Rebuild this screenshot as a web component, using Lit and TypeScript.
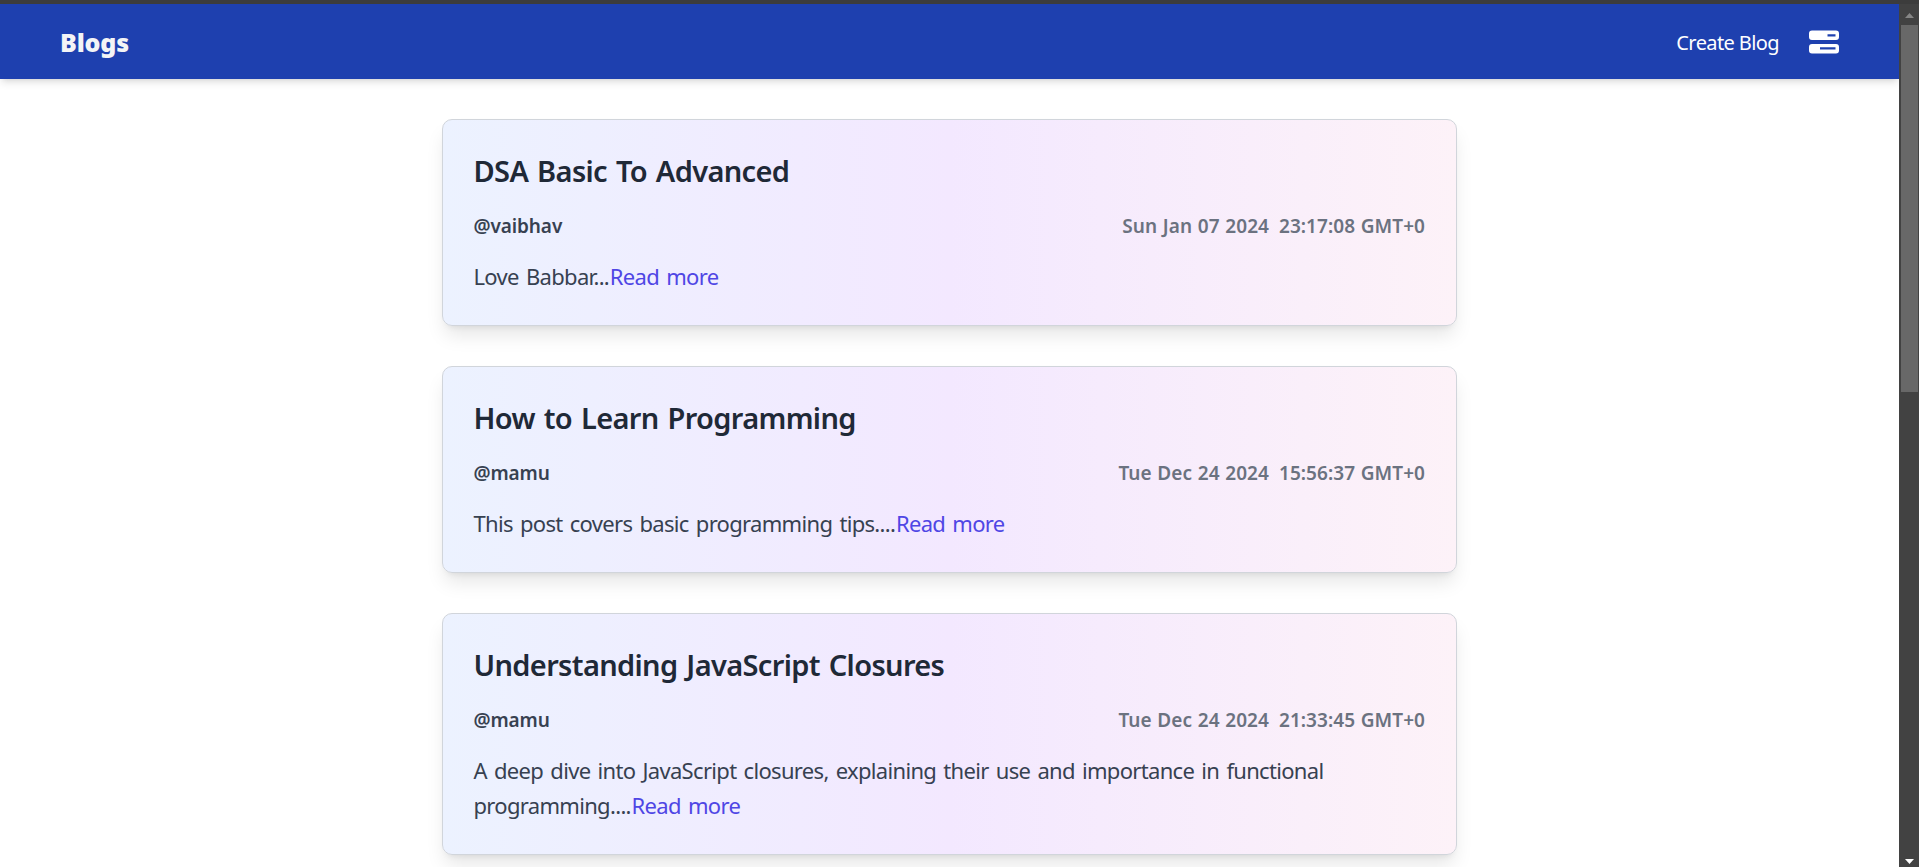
import { LitElement, html, css } from "lit";
import { customElement, property } from "lit/decorators.js";

interface Post {
  title: string;
  author: string;
  day: string;
  time: string;
  text: string;
}

const POSTS: Post[] = [
  { title: "DSA Basic To Advanced", author: "vaibhav", day: "Sun Jan 07 2024", time: "23:17:08 GMT+0", text: "Love Babbar..." },
  { title: "How to Learn Programming", author: "mamu", day: "Tue Dec 24 2024", time: "15:56:37 GMT+0", text: "This post covers basic programming tips...." },
  { title: "Understanding JavaScript Closures", author: "mamu", day: "Tue Dec 24 2024", time: "21:33:45 GMT+0", text: "A deep dive into JavaScript closures, explaining their use and importance in functional programming...." },
];

@customElement("blog-card")
class BlogCard extends LitElement {
  @property({ attribute: false }) post!: Post;

  static styles = css`
    :host {
      display: block;
      box-sizing: border-box;
      padding: 30px 31px 31px 30.5px;
      border: 1px solid #d1d5db;
      border-radius: 10px;
      background: linear-gradient(to right, #ecf2ff, #f3e8ff 50%, #fdf2f8);
      box-shadow: 0 12.5px 18.75px -3.75px rgb(0 0 0 / 0.1), 0 5px 7.5px -5px rgb(0 0 0 / 0.1);
    }
    .title { margin: 0 0 20px; padding-top: 1px; font-size: 29px; line-height: 40px; font-weight: 560; letter-spacing: -0.65px; word-spacing: 2px; color: #1f2937; }
    .meta { display: flex; justify-content: space-between; margin-bottom: 18px; font-size: 19px; line-height: 30px; font-weight: 560; }
    .author { color: #374151; letter-spacing: -0.1px; }
    .date { display: flex; gap: 10px; color: #6b7280; letter-spacing: 0.05px; word-spacing: 0.7px; }
    .text { margin: 0; font-size: 22px; line-height: 35px; letter-spacing: -0.68px; word-spacing: 2.1px; color: #374151; }
    .more { padding-left: 0.7px; color: #4f46e5; text-decoration: none; }
  `;

  render() {
    const p = this.post;
    return html`
      <h2 class="title">${p.title}</h2>
      <div class="meta">
        <span class="author">@${p.author}</span>
        <span class="date"><span>${p.day}</span><span>${p.time}</span></span>
      </div>
      <p class="text">${p.text}<a class="more">Read more</a></p>
    `;
  }
}

@customElement("app-root")
class AppRoot extends LitElement {
  static styles = css`
    :host { display: flex; flex-direction: column; height: 100vh; overflow: hidden; background: #fff; font-family: "Noto Sans", "Open Sans", sans-serif; }
    .edge { flex: none; height: 4px; background: #3c3c3c; }
    .frame { flex: 1; min-height: 0; display: flex; }
    .page { flex: 1; min-width: 0; overflow: hidden; }
    .nav { box-sizing: border-box; height: 75px; padding: 0 60px; display: flex; align-items: center; justify-content: space-between; background: #1e40af; box-shadow: 0 5px 7.5px -1.25px rgb(0 0 0 / 0.1), 0 2.5px 5px -2.5px rgb(0 0 0 / 0.1); }
    .logo { color: #f3f4f6; font-size: 25px; line-height: 35px; font-weight: 900; letter-spacing: -0.2px; padding-top: 2px; }
    .links { display: flex; align-items: center; gap: 30px; color: #fff; font-size: 20px; line-height: 30px; letter-spacing: -0.6px; }
    .label { padding-top: 2px; }
    .icon { display: block; width: 30px; height: 24px; }
    .list { width: 1015px; margin: 40px auto 0; display: flex; flex-direction: column; gap: 40px; }
    .bar { flex: none; box-sizing: border-box; width: 20px; padding: 9px 1px 3px 2px; display: flex; flex-direction: column; align-items: center; background: #424242; }
    .arrow { width: 9px; height: 5px; display: block; }
    .thumb { width: 17px; height: 367px; margin: 7px 0 auto; background: #686868; }
  `;

  render() {
    return html`
      <div class="edge"></div>
      <div class="frame">
        <div class="page">
          <nav class="nav">
            <span class="logo">Blogs</span>
            <div class="links">
              <span class="label">Create Blog</span>
              <svg class="icon" viewBox="0 0 30 24" fill="#fff" fill-rule="evenodd">
                <path d="M3 .5H27Q30 .5 30 3.500V7Q30 10 27 10H3Q0 10 0 7V3.500Q0 .5 3 .5ZM18.500 4.300V6.500H26.500V4.300Z" />
                <path d="M3 14H27Q30 14 30 17V20.500Q30 23.500 27 23.500H3Q0 23.500 0 20.500V17Q0 14 3 14ZM11 17.300V19.500H26.500V17.300Z" />
              </svg>
            </div>
          </nav>
          <main class="list">${POSTS.map((p) => html`<blog-card .post=${p}></blog-card>`)}</main>
        </div>
        <div class="bar">
          <svg class="arrow" viewBox="0 0 9 5"><path d="M0 5L4.500 0L9 5Z" fill="#868686" /></svg>
          <div class="thumb"></div>
          <svg class="arrow" viewBox="0 0 9 5"><path d="M0 0L4.500 5L9 0Z" fill="#fff" /></svg>
        </div>
      </div>
    `;
  }
}
